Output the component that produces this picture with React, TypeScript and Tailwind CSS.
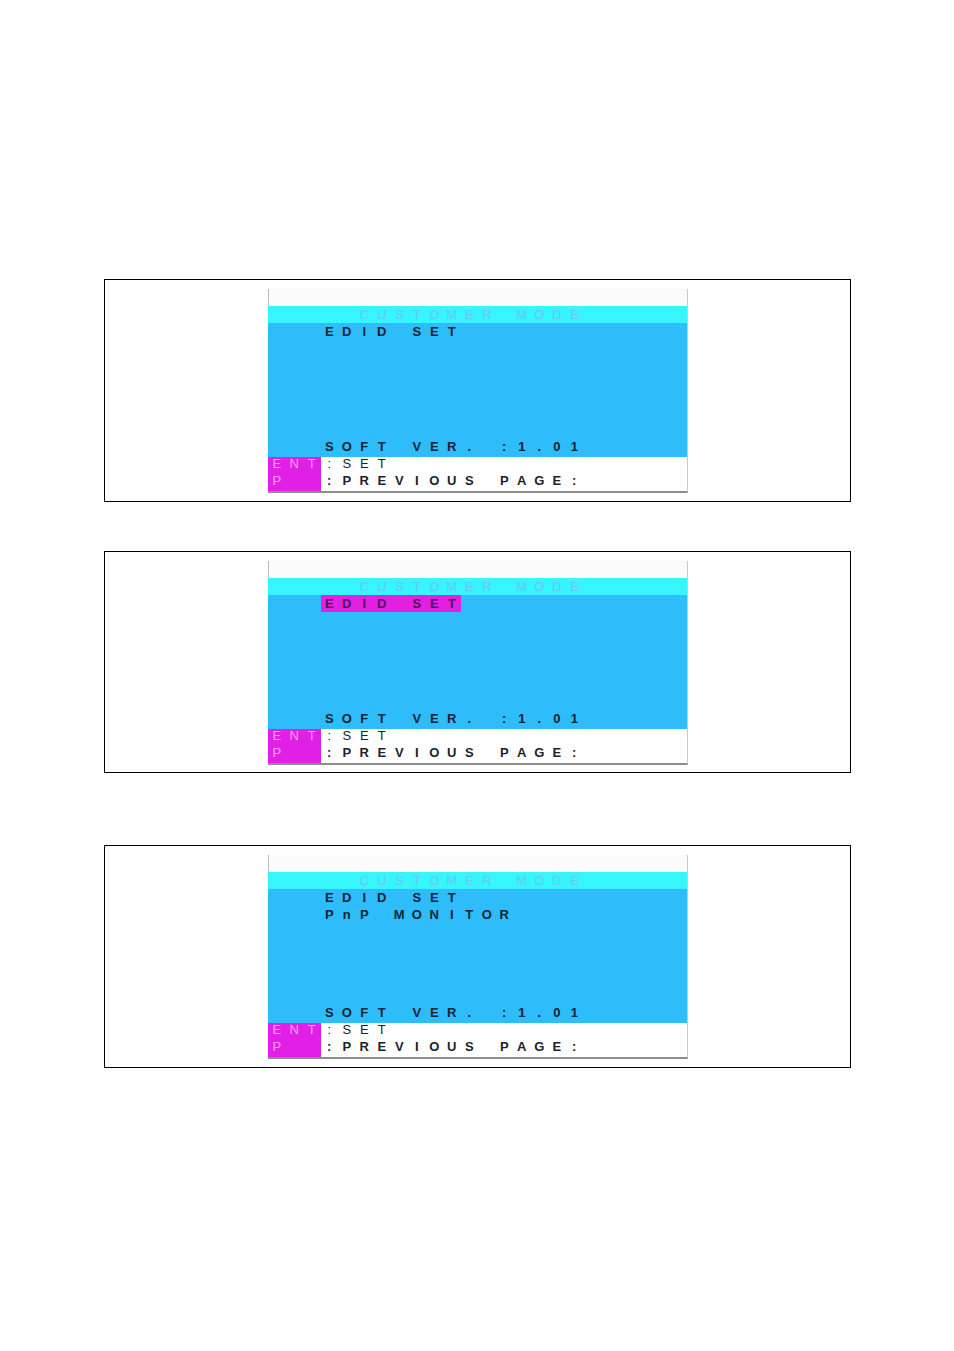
import React from "react";

// one character cell of the on-screen display grid (24 cols x 12 rows)
function Cells({ text, className = "" }: { text: string; className?: string }) {
  return (
    <div className={`flex ${className}`}>
      {text.split("").map((ch, i) => (
        <span key={i} className="w-[17.5px] shrink-0 text-center">
          {ch === " " ? "\u00a0" : ch}
        </span>
      ))}
    </div>
  );
}

interface OsdProps {
  items: string[];
  highlight?: number;
}

function OsdScreen({ items, highlight }: OsdProps) {
  return (
    <div className="w-[420px] font-['Liberation_Sans',Arial,sans-serif] text-[13px] leading-none font-bold border-r border-[#c9c9c9] border-b-2 border-b-[#8d8d8d]">
      {/* top strip */}
      <div className="h-[17px] bg-[#fbfbfb] border-l border-[#c4bcc4]" />

      {/* title bar */}
      <div className="h-[16.5px] bg-[#36f5fc] flex items-center">
        <Cells text="     CUSTOMER MODE" className="font-normal text-[#68c6f2]" />
      </div>

      {/* menu area */}
      <div className="h-[134px] bg-[#2ebcfa] flex flex-col text-[#0f2435]">
        {items.map((item, i) => (
          <div key={item} className="h-[17px] flex items-center">
            <span className="w-[52.5px] shrink-0" />
            <div
              className={`h-[17px] flex items-center ${
                highlight === i ? "bg-[#e21fe3] text-[#4a1456]" : ""
              }`}
            >
              <Cells text={item} />
            </div>
          </div>
        ))}
        <div className="mt-auto h-[17px] pb-[3px] flex items-center">
          <Cells text="   SOFT VER. :1.01" />
        </div>
      </div>

      {/* key help */}
      <div className="h-[34px] bg-white flex">
        <div className="w-[52.5px] shrink-0 bg-[#e21fe6] text-[#f6a2f3] font-normal flex flex-col">
          <div className="h-[17px] pb-[4px] flex items-center">
            <Cells text="ENT" />
          </div>
          <div className="h-[17px] pb-[4px] flex items-center">
            <Cells text="P" />
          </div>
        </div>
        <div className="flex flex-col text-[#1a222e]">
          <div className="h-[17px] pb-[4px] flex items-center font-normal">
            <Cells text=":SET" />
          </div>
          <div className="h-[17px] pb-[4px] flex items-center">
            <Cells text=":PREVIOUS PAGE:" />
          </div>
        </div>
      </div>
    </div>
  );
}

function Frame({ children, className = "" }: { children: React.ReactNode; className?: string }) {
  return (
    <div className={`ml-[104px] w-[747px] border border-black pl-[163px] pt-[9px] ${className}`}>
      {children}
    </div>
  );
}

export default function App() {
  return (
    <div className="w-[954px] h-[1351px] bg-white pt-[279px]">
      <Frame className="h-[223px]">
        <OsdScreen items={["EDID SET"]} />
      </Frame>
      <Frame className="h-[222px] mt-[49px]">
        <OsdScreen items={["EDID SET"]} highlight={0} />
      </Frame>
      <Frame className="h-[223px] mt-[72px]">
        <OsdScreen items={["EDID SET", "PnP MONITOR"]} />
      </Frame>
    </div>
  );
}
